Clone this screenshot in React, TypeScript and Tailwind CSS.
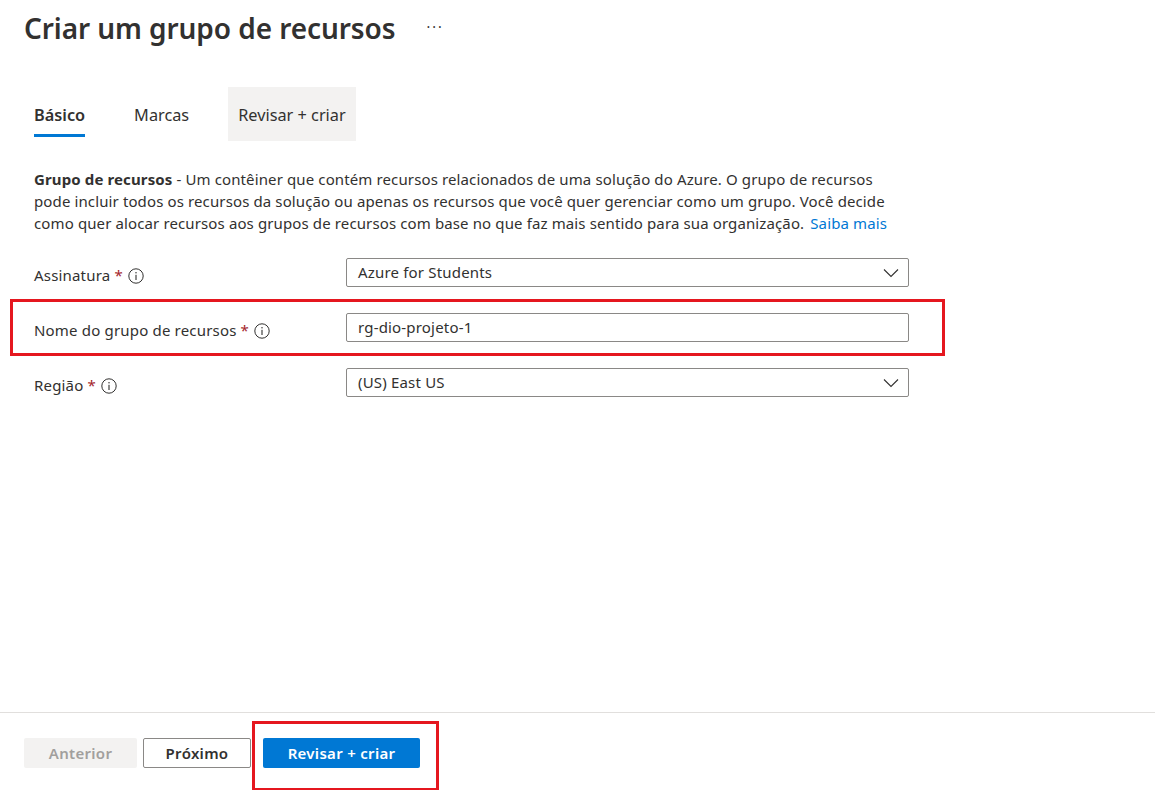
import React from 'react';

const font = { fontFamily: '"Noto Sans", "Open Sans", sans-serif' };

const InfoIcon: React.FC = () => (
  <svg width="16" height="16" viewBox="0 0 16 16" className="inline-block">
    <circle cx="8" cy="8" r="7.2" fill="none" stroke="#323130" strokeWidth="1" />
    <rect x="7.45" y="6.8" width="1.1" height="5.2" fill="#323130" />
    <circle cx="8" cy="4.7" r="0.75" fill="#323130" />
  </svg>
);

const Chevron: React.FC = () => (
  <svg width="16" height="10" viewBox="0 0 16 10">
    <path d="M1 1.5 L8 8.5 L15 1.5" fill="none" stroke="#323130" strokeWidth="1.1" />
  </svg>
);

const Label: React.FC<{ text: string }> = ({ text }) => (
  <div className="w-[312px] pt-[6px] flex items-center gap-[5px] text-[15px] tracking-[0.18px] text-[#323130]">
    <span>
      {text} <span className="text-[#a4262c]">*</span>
    </span>
    <InfoIcon />
  </div>
);

const Select: React.FC<{ value: string }> = ({ value }) => (
  <div className="w-[563px] h-[29px] border border-[#8a8886] rounded-[2px] flex items-center justify-between pl-[11px] pr-[9px] text-[15px] tracking-[0.18px] text-[#323130]">
    <span>{value}</span>
    <Chevron />
  </div>
);

export default function App() {
  return (
    <div className="w-full h-[790px] bg-white flex flex-col overflow-hidden text-[#323130]" style={font}>
      {/* Header */}
      <div className="px-6 pt-[8px] flex items-center gap-[31px]">
        <h1 className="text-[28px] font-semibold leading-[40px] tracking-[-0.08px]">Criar um grupo de recursos</h1>
        <span className="text-[14px] tracking-[2px] text-[#323130] pb-[4px]">···</span>
      </div>

      {/* Tabs */}
      <div className="mt-[39px] px-6 flex items-stretch gap-[29px] h-[54px] text-[16.3px]">
        <div className="relative px-[10px] flex items-center pt-[2px]">
          <span className="font-semibold">Básico</span>
          <span className="absolute left-[10px] right-[10px] bottom-[4px] h-[3px] bg-[#0078d4]" />
        </div>
        <div className="px-[10px] flex items-center pt-[2px]">Marcas</div>
        <div className="px-[10px] flex items-center pt-[2px] bg-[#f3f2f1]">Revisar + criar</div>
      </div>

      {/* Description */}
      <div className="mt-[27px] px-[34px] text-[15px] leading-[22px] tracking-[0.12px]">
        <span className="font-bold">Grupo de recursos</span> - Um contêiner que contém recursos relacionados de uma solução do Azure. O grupo de recursos
        <br />
        pode incluir todos os recursos da solução ou apenas os recursos que você quer gerenciar como um grupo. Você decide
        <br />
        como quer alocar recursos aos grupos de recursos com base no que faz mais sentido para sua organização.{' '}
        <span className="text-[#0078d4] ml-[2px]">Saiba mais</span>
      </div>

      {/* Form */}
      <div className="mt-[24px] px-[34px] flex flex-col gap-[26px]">
        <div className="flex items-center">
          <Label text="Assinatura" />
          <Select value="Azure for Students" />
        </div>
        <div className="relative flex items-center">
          <Label text="Nome do grupo de recursos" />
          <div className="w-[563px] h-[29px] border border-[#8a8886] rounded-[2px] flex items-center pl-[11px] text-[15px] tracking-[0.18px]">
            rg-dio-projeto-1
          </div>
          <div className="absolute left-[-24px] top-[-14px] w-[935px] h-[57px] border-[3px] border-[#e5171f] pointer-events-none" />
        </div>
        <div className="flex items-center">
          <Label text="Região" />
          <Select value="(US) East US" />
        </div>
      </div>

      {/* Footer */}
      <div className="mt-auto border-t border-[#e1dfdd] h-[78px] px-6 pt-[25px] flex items-start gap-[6px] text-[15px] tracking-[0.3px]">
        <button className="w-[113px] h-[30px] rounded-[2px] bg-[#f3f2f1] text-[#a19f9d] font-semibold">Anterior</button>
        <button className="w-[108px] h-[30px] rounded-[2px] border border-[#8a8886] bg-white text-[#323130] font-semibold">Próximo</button>
        <div className="relative ml-[6px]">
          <button className="w-[157px] h-[30px] rounded-[2px] bg-[#0078d4] text-white font-semibold">Revisar + criar</button>
          <div className="absolute left-[-11px] top-[-17px] w-[187px] h-[70px] border-[3px] border-[#e5171f] pointer-events-none" />
        </div>
      </div>
    </div>
  );
}
